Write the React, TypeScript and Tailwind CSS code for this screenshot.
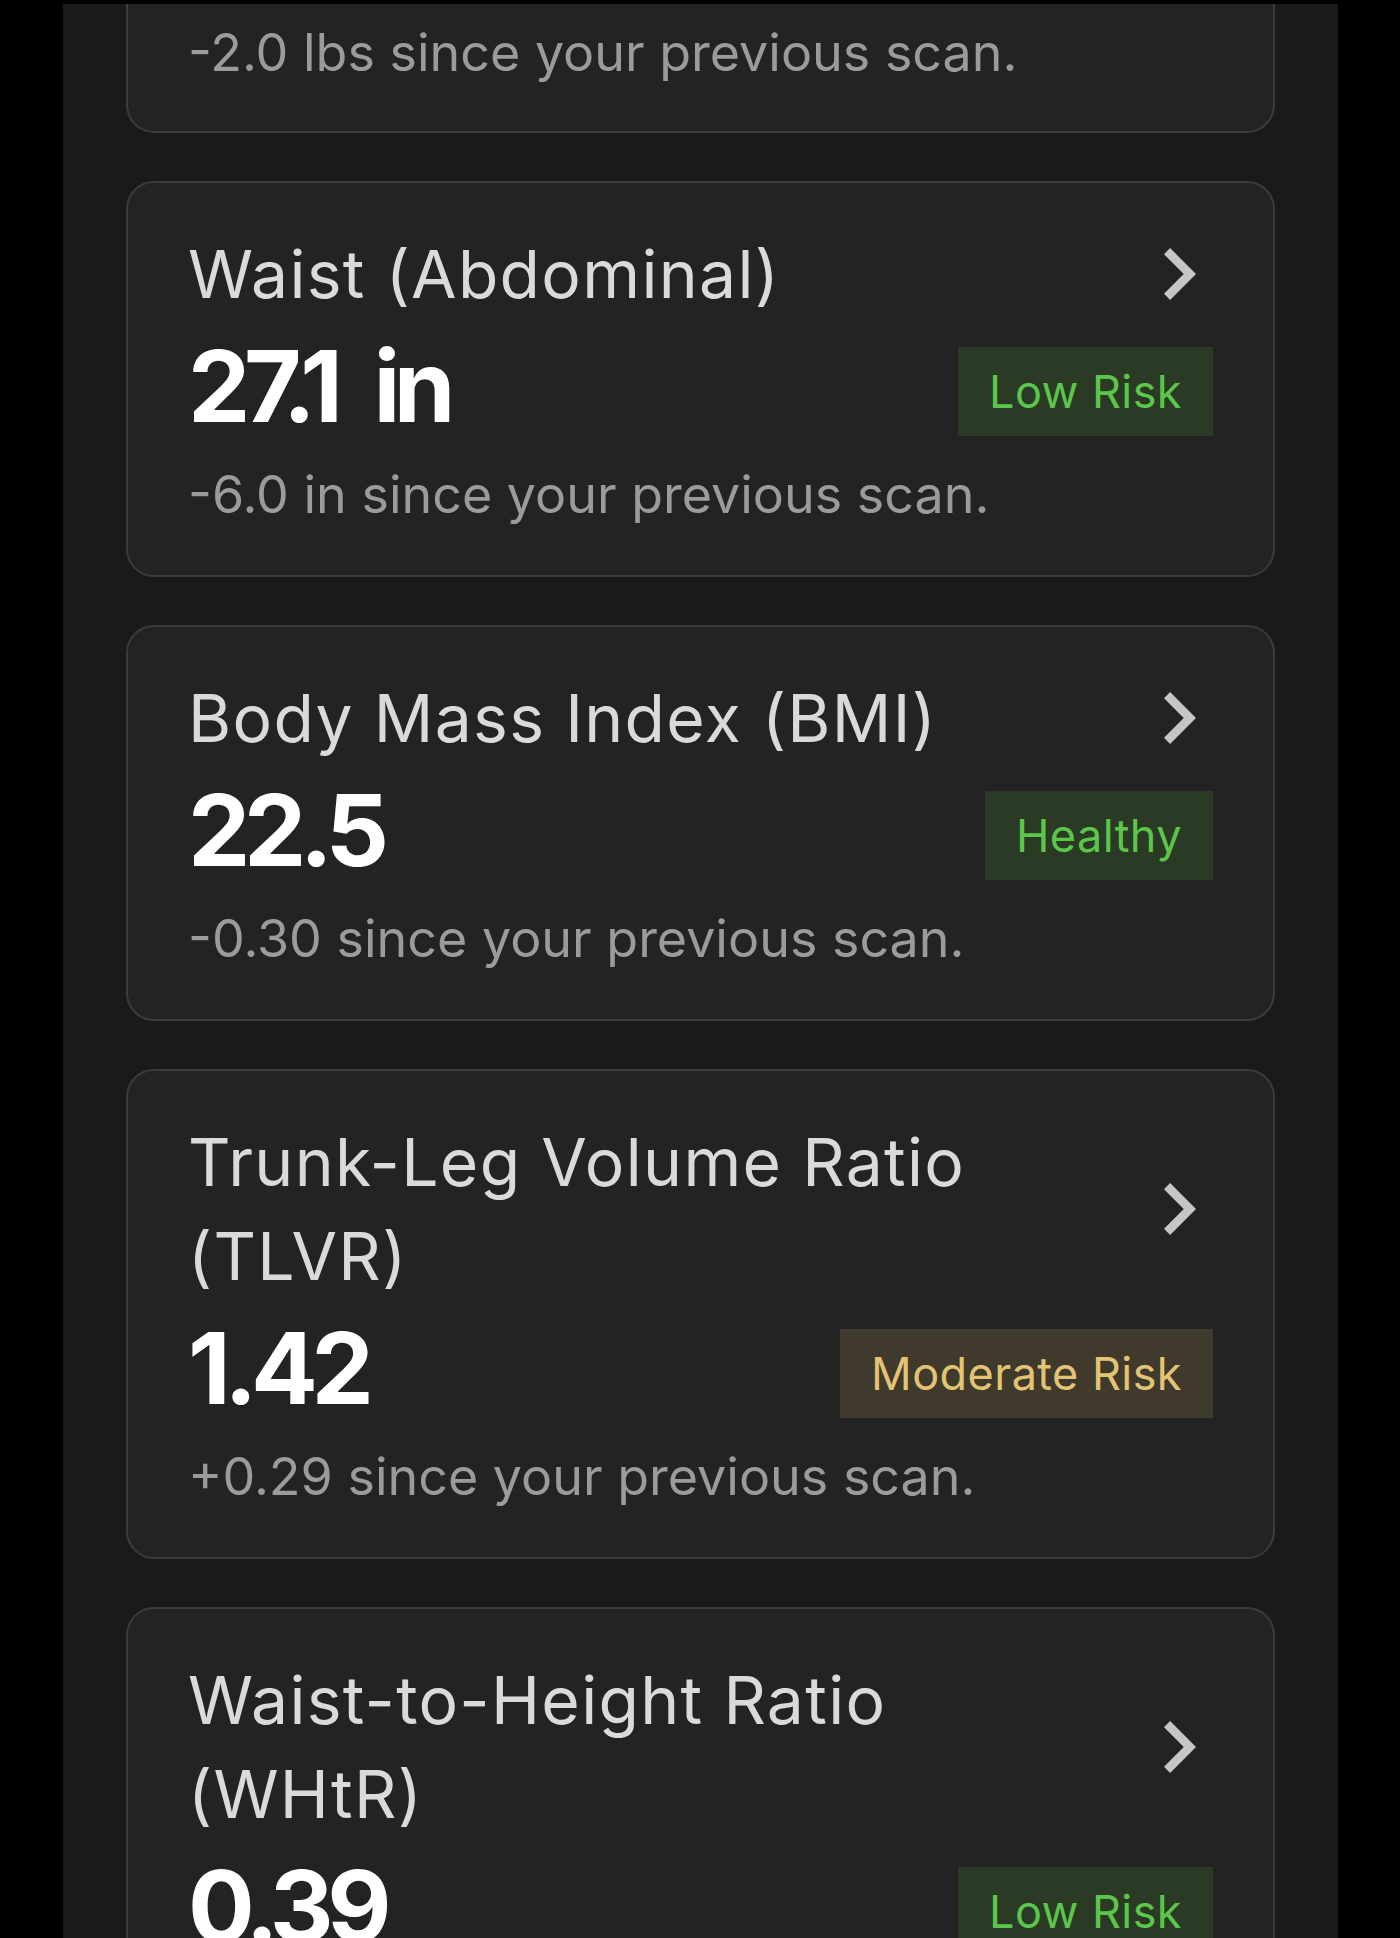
import React from "react";

type Tone = "green" | "amber";

interface Metric {
  title: string;
  value: string;
  status: string;
  tone: Tone;
  change: string;
}

const metrics: Metric[] = [
  { title: "Waist (Abdominal)", value: "27.1 in", status: "Low Risk", tone: "green", change: "-6.0 in since your previous scan." },
  { title: "Body Mass Index (BMI)", value: "22.5", status: "Healthy", tone: "green", change: "-0.30 since your previous scan." },
  { title: "Trunk-Leg Volume Ratio (TLVR)", value: "1.42", status: "Moderate Risk", tone: "amber", change: "+0.29 since your previous scan." },
  { title: "Waist-to-Height Ratio (WHtR)", value: "0.39", status: "Low Risk", tone: "green", change: "-0.04 since your previous scan." },
];

const font = { fontFamily: "Inter, 'Open Sans', sans-serif" };

function Chevron() {
  return (
    <svg viewBox="8.59 6 7.41 12" className="w-[32px] h-[52px] shrink-0 mr-[17px]" fill="#c6c6c6">
      <path d="M10 6 8.59 7.41 13.17 12l-4.58 4.59L10 18l6-6z" />
    </svg>
  );
}

function MetricCard({ m }: { m: Metric }) {
  const badge =
    m.tone === "green"
      ? "bg-[#2a3a25] text-[#5cc64a]"
      : "bg-[#3f3a2b] text-[#e2c474]";

  return (
    <div className="rounded-[28px] border-2 border-[#3b3b3b] bg-[#232323] px-[60px] pt-[44px] pb-[48px] shrink-0">
      <div className="flex items-center justify-between">
        <div className="w-[880px] text-[66px] leading-[94px] tracking-[0.02em] text-[#dadada]">{m.title}</div>
        <Chevron />
      </div>

      <div className="flex items-end justify-between mt-[15px]">
        <div className="text-[99px] leading-[100px] font-bold text-white tracking-[-0.065em] [word-spacing:0.2em]">
          {m.value}
        </div>
        <div className={`h-[89px] px-[31px] flex items-center text-[45px] tracking-[0.01em] ${badge}`}>{m.status}</div>
      </div>

      <div className="mt-[27px] text-[52px] leading-[64px] text-[#9b9b9b]">{m.change}</div>
    </div>
  );
}

export default function App() {
  return (
    <div className="h-[1938px] overflow-hidden bg-black pt-[4px] pl-[63px] pr-[62px]" style={font}>
      <div className="h-full bg-[#1a1a1c] px-[63px] flex flex-col gap-[48px] overflow-hidden">
        {/* tail of the weight card, scrolled off the top */}
        <div className="h-[129px] shrink-0 rounded-b-[28px] border-x-2 border-b-2 border-[#3b3b3b] bg-[#232323] px-[60px] pt-[17px]">
          <div className="text-[52px] leading-[64px] text-[#9b9b9b]">-2.0 lbs since your previous scan.</div>
        </div>

        {metrics.map((m) => (
          <MetricCard key={m.title} m={m} />
        ))}
      </div>
    </div>
  );
}
